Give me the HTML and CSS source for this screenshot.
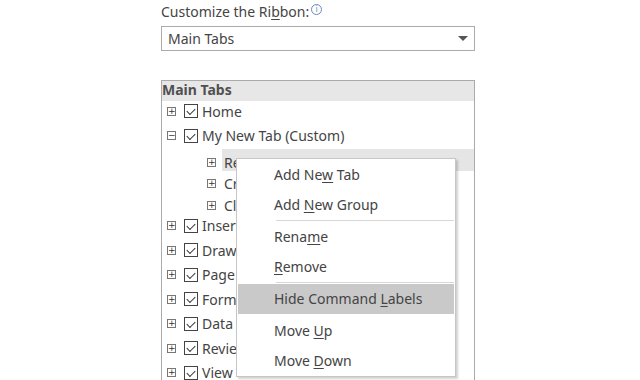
FILE: index.html
```html
<!DOCTYPE html>
<html>
<head>
<meta charset="utf-8">
<link rel="stylesheet" href="styles.css">
</head>
<body>
<div class="panel">
  <div class="label">Customize the Ri<u>b</u>bon:<span class="info">i</span></div>
  <div class="select"><span>Main Tabs</span><span class="arrow"></span></div>
  <div class="tree">
    <div class="tree-head">Main Tabs</div>
    <div class="row top first"><span class="exp">+</span><span class="chk"></span><span class="txt">Home</span></div>
    <div class="row top"><span class="exp">−</span><span class="chk"></span><span class="txt">My New Tab (Custom)</span></div>
    <div class="row child sel"><span class="exp">+</span><span class="txt">Reading (Custom)</span></div>
    <div class="row child"><span class="exp">+</span><span class="txt">Create (Custom)</span></div>
    <div class="row child"><span class="exp">+</span><span class="txt">Clipboard (Custom)</span></div>
    <div class="row top"><span class="exp">+</span><span class="chk"></span><span class="txt">Insert</span></div>
    <div class="row top"><span class="exp">+</span><span class="chk"></span><span class="txt">Draw</span></div>
    <div class="row top"><span class="exp">+</span><span class="chk"></span><span class="txt">Page Layout</span></div>
    <div class="row top"><span class="exp">+</span><span class="chk"></span><span class="txt">Formulas</span></div>
    <div class="row top"><span class="exp">+</span><span class="chk"></span><span class="txt">Data</span></div>
    <div class="row top"><span class="exp">+</span><span class="chk"></span><span class="txt">Review</span></div>
    <div class="row top"><span class="exp">+</span><span class="chk"></span><span class="txt">View</span></div>
  </div>
</div>
<div class="menu">
  <div class="item">Add Ne<u>w</u> Tab</div>
  <div class="item">Add <u>N</u>ew Group</div>
  <div class="sep"></div>
  <div class="item">Rena<u>m</u>e</div>
  <div class="item"><u>R</u>emove</div>
  <div class="sep"></div>
  <div class="item hl">Hide Command <u>L</u>abels</div>
  <div class="item">Move <u>U</u>p</div>
  <div class="item">Move <u>D</u>own</div>
</div>
</body>
</html>
```
FILE: styles.css
```css
html, body {
  margin: 0;
  padding: 0;
  background: #fff;
  overflow: hidden;
  height: 380px;
}
body {
  font-family: "Noto Sans", "Open Sans", sans-serif;
  font-size: 14px;
  color: #444;
  position: relative;
}
u { text-decoration-thickness: 1px; text-underline-offset: 2px; }
.panel {
  width: 314px;
  margin-left: 161px;
  padding-top: 2px;
}
.label {
  height: 22px;
  line-height: 20px;
  display: flex;
  align-items: flex-start;
}
.info {
  display: inline-block;
  width: 9px;
  height: 9px;
  border: 1px solid #6a8bbf;
  border-radius: 50%;
  color: #6a8bbf;
  font-size: 8px;
  line-height: 9px;
  text-align: center;
  margin-left: 2px;
  margin-top: 2px;
  font-family: "DejaVu Sans", sans-serif;
}
.select {
  box-sizing: border-box;
  height: 25px;
  margin-top: 2px;
  border: 1px solid #ababab;
  display: flex;
  align-items: center;
  justify-content: space-between;
  padding: 0 6px 0 6px;
}
.arrow {
  width: 0; height: 0;
  border-left: 5px solid transparent;
  border-right: 5px solid transparent;
  border-top: 5px solid #555;
}
.tree {
  margin-top: 29px;
  border: 1px solid #ababab;
  height: 330px;
}
.tree-head {
  background: #e7e7e7;
  font-weight: bold;
  height: 20px;
  line-height: 17px;
  color: #505050;
}
.row {
  display: flex;
  align-items: center;
  white-space: nowrap;
  box-sizing: border-box;
}
.row.top { height: 24.5px; padding-left: 5px; }
.row.first { margin-top: -2px; }
.row.child { height: 21.5px; padding-left: 45px; padding-top: 5px; }
.row.child .txt { max-width: 12px; overflow: hidden; }
.row.sel { background: #e5e5e5; margin-left: 60px; padding-left: 0; margin-top: 1px; }
.row.sel .exp { margin-left: -15px; }
.exp {
  box-sizing: border-box;
  width: 9px;
  height: 9px;
  border: 1px solid #777;
  font-size: 9px;
  line-height: 6px;
  text-align: center;
  color: #333;
  font-family: "DejaVu Sans", sans-serif;
  flex: none;
  margin-right: 8px;
}
.chk {
  box-sizing: border-box;
  width: 14px;
  height: 14px;
  border: 1px solid #444;
  position: relative;
  flex: none;
  margin-right: 4px;
}
.chk::after {
  content: "";
  position: absolute;
  top: 3px;
  left: 2px;
  width: 7px;
  height: 4px;
  border-left: 1px solid #333;
  border-bottom: 1px solid #333;
  transform: rotate(-45deg);
  transform-origin: center;
}
.txt { color: #444; }
.menu {
  position: absolute;
  left: 236px;
  top: 158px;
  width: 216px;
  background: #fff;
  border: 1px solid #c6c6c6;
  box-shadow: 2px 2px 2px rgba(0,0,0,0.18);
  padding: 1px 1px 0 1px;
}
.item {
  height: 30px;
  line-height: 30px;
  padding-left: 36px;
  color: #444;
}
.item.hl { background: #c9c9c9; margin-bottom: 2px; }
.sep {
  height: 1px;
  background: #d8d8d8;
  margin: 0 0 1px 38px;
}
```
